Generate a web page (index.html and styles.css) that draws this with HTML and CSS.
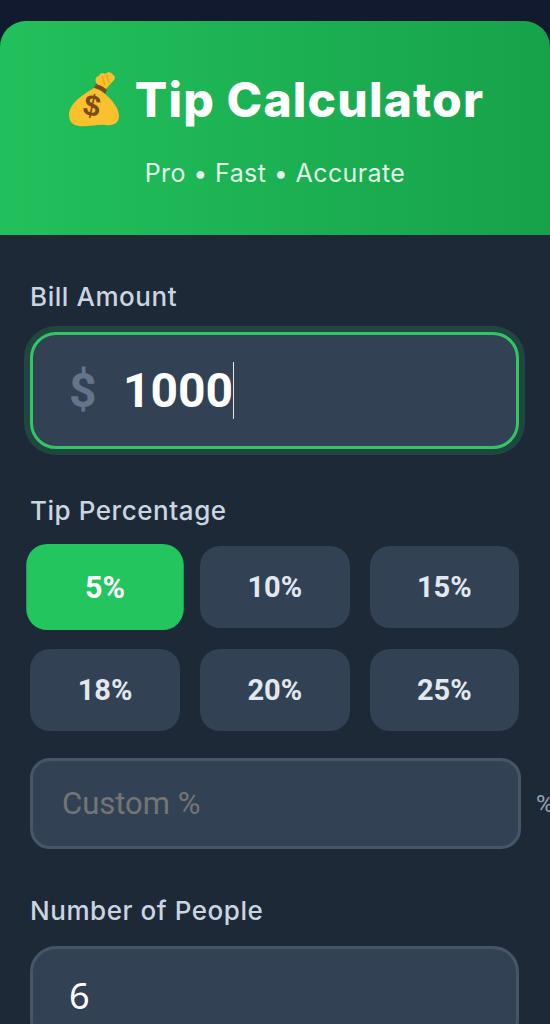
FILE: index.html
```html
<!DOCTYPE html>
<html lang="en">

<head>
  <meta charset="UTF-8">
  <meta name="viewport" content="width=device-width,initial-scale=1.0">
  <title>Tip Calculator</title>
  <link rel="stylesheet" href="styles.css">
</head>

<body>
  <div class="calculator">
    <header class="header">
      <h1 class="title">
        <svg class="bag" viewBox="0 0 50 56" aria-hidden="true">
          <path d="M28 13 C25 9 27 5 30 5 C31 2 34 1 36 3 C39 0 43 1 44 4 C47 5 46 9 44 10 L37 18 C34 16 30 15 28 13 Z" fill="#fbc02d"/>
          <path d="M33 5 C34 8 35 11 36 14 M38 3 C38 6 39 9 40 12" stroke="#e8a317" stroke-width="1.2" fill="none"/>
          <path d="M27 13 C31 14 35 16 38 19 L36 23 C33 20 29 18 25 17 Z" fill="#7b4a1e"/>
          <path d="M25 17 C29 18 33 20 36 23 C41 27 50 36 50 45 C50 53 43 55 36 54 C30 53 18 56 10 55 C3 54 0 50 0 44 C0 33 13 24 25 17 Z" fill="#fbc02d"/>
          <text class="bag-sign" x="23" y="45" transform="rotate(12 23 35)">$</text>
        </svg>
        Tip Calculator
      </h1>
      <p class="subtitle">Pro • Fast • Accurate</p>
    </header>

    <main class="content">
      <section class="field">
        <label class="label">Bill Amount</label>
        <div class="bill-input">
          <span class="currency">$</span>
          <span class="bill-value">1000</span>
          <span class="caret"></span>
        </div>
      </section>

      <section class="field">
        <label class="label">Tip Percentage</label>
        <div class="tips">
          <button class="tip active">5%</button>
          <button class="tip">10%</button>
          <button class="tip">15%</button>
          <button class="tip">18%</button>
          <button class="tip">20%</button>
          <button class="tip">25%</button>
        </div>
        <div class="custom-row">
          <input class="text-input custom-input" type="text" placeholder="Custom %">
          <span class="custom-unit">%</span>
        </div>
      </section>

      <section class="field">
        <label class="label">Number of People</label>
        <input class="text-input people-input" type="text" value="6">
      </section>
    </main>
  </div>
</body>

</html>
```

FILE: styles.css
```css
html, body {
  height: 100%;
  overflow: hidden;
}
body {
  margin: 0;
  padding-top: 21px;
  box-sizing: border-box;
  background: #111a2e;
  font-family: "Inter", "Liberation Sans", sans-serif;
}
.calculator {
  height: 1003px;
  background: #1e2937;
  border-radius: 26px 26px 0 0;
  overflow: hidden;
}

/* Header */
.header {
  height: 214px;
  box-sizing: border-box;
  padding-top: 46px;
  background: linear-gradient(90deg, #22c05c, #17a24a);
  text-align: center;
  color: white;
}
.title {
  display: flex;
  justify-content: center;
  align-items: center;
  gap: 16px;
  height: 64px;
  margin: 0;
  padding-left: 3px;
  font-size: 48px;
  font-weight: 800;
  letter-spacing: 1.15px;
}
.bag {
  width: 50px;
  height: 56px;
}
.bag-sign {
  font-family: "Liberation Sans", sans-serif;
  font-size: 30px;
  font-weight: 700;
  letter-spacing: 0;
  fill: #7b4a1e;
  text-anchor: middle;
}
.subtitle {
  margin: 24px 0 0;
  font-size: 25px;
  font-weight: 400;
  line-height: 36px;
  letter-spacing: 0.4px;
  color: rgba(255, 255, 255, 0.88);
}

/* Form */
.content {
  padding: 44px 31px 0 30px;
}
.field {
  margin-bottom: 44px;
}
.label {
  display: block;
  margin-bottom: 17px;
  font-size: 26px;
  font-weight: 500;
  line-height: 36px;
  letter-spacing: 0.55px;
  color: #cbd5e1;
}
.bill-input {
  display: flex;
  align-items: center;
  height: 117px;
  box-sizing: border-box;
  padding-left: 36px;
  background: #334155;
  border: 3px solid #34c465;
  border-radius: 26px;
  box-shadow: 0 0 0 6px rgba(34, 197, 94, 0.2);
}
.currency {
  width: 54px;
  font-family: "Roboto", sans-serif;
  font-size: 48px;
  font-weight: 700;
  color: #64748b;
}
.bill-value {
  font-family: "Roboto", sans-serif;
  font-size: 48px;
  font-weight: 700;
  color: white;
}
.caret {
  width: 1px;
  height: 57px;
  background: #e2e8f0;
}

/* Tip buttons */
.tips {
  display: grid;
  grid-template-columns: 150px 149.5px 149.5px;
  grid-auto-rows: 82px;
  gap: 21px 20px;
}
.tip {
  background: #334155;
  border: 0;
  border-radius: 20px;
  font-family: "Roboto", sans-serif;
  font-size: 29px;
  font-weight: 700;
  color: #e2e8f0;
}
.tip.active {
  background: #22c55e;
  color: white;
  transform: scale(1.05);
}

/* Text inputs */
.text-input {
  box-sizing: border-box;
  background: #334155;
  border: 3px solid #475569;
  outline: none;
}
.custom-row {
  display: flex;
  align-items: center;
  gap: 15px;
  width: 560px;
  margin-top: 27px;
}
.custom-input {
  flex: none;
  width: 491px;
  height: 91px;
  padding-left: 29px;
  border-radius: 20px;
  font-family: "Roboto", sans-serif;
  font-size: 31px;
}
.custom-input::placeholder {
  color: #757575;
  opacity: 1;
}
.custom-unit {
  font-family: "Roboto", sans-serif;
  font-size: 24px;
  color: #94a3b8;
}
.people-input {
  display: block;
  width: 100%;
  height: 99px;
  padding-left: 36px;
  border-radius: 26px;
  font-family: "Noto Sans", sans-serif;
  font-size: 36px;
  color: white;
}
```
